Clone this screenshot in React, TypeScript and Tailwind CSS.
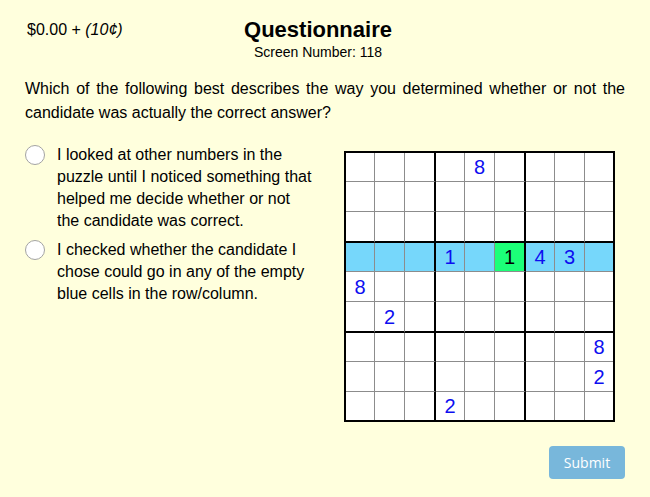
const colW = ['w-[29px]', 'w-[30px]', 'w-[31px]', 'w-[29px]', 'w-[30px]', 'w-[31px]', 'w-[29px]', 'w-[30px]', 'w-[28px]']
const rowH = ['h-[29px]', 'h-[30px]', 'h-[31px]', 'h-[29px]', 'h-[30px]', 'h-[31px]', 'h-[29px]', 'h-[30px]', 'h-[28px]']

// [row, col] -> digit
const givens: Record<string, string> = {
  '0-4': '8',
  '3-3': '1',
  '3-5': '1',
  '3-6': '4',
  '3-7': '3',
  '4-0': '8',
  '5-1': '2',
  '6-8': '8',
  '7-8': '2',
  '8-3': '2',
}

function rightBorder(c: number) {
  if (c === 8) return ''
  if (c === 2 || c === 5) return 'border-r-2 border-r-black'
  return 'border-r border-r-[#8c8c8c]'
}

function bottomBorder(r: number) {
  if (r === 8) return ''
  if (r === 2 || r === 5) return 'border-b-2 border-b-black'
  return 'border-b border-b-[#8c8c8c]'
}

function Board() {
  const rows = Array.from({ length: 9 }, (_, r) => r)
  return (
    <div className="flex flex-col border-2 border-black bg-white">
      {rows.map((r) => (
        <div key={r} className="flex">
          {rows.map((c) => {
            const key = `${r}-${c}`
            const candidate = r === 3 && c === 5
            const bg = candidate ? 'bg-[#1cff78]' : r === 3 ? 'bg-[#76d7fb]' : 'bg-white'
            const color = candidate ? 'text-black' : 'text-[#0e0ef0]'
            return (
              <div
                key={c}
                className={`flex items-center justify-center text-[20px] leading-none ${colW[c]} ${rowH[r]} ${rightBorder(c)} ${bottomBorder(r)} ${bg} ${color}`}
              >
                {givens[key] ?? ''}
              </div>
            )
          })}
        </div>
      ))}
    </div>
  )
}

function Option({ text }: { text: string }) {
  return (
    <label className="flex items-start gap-3">
      <span className="mt-px h-[20px] w-[20px] shrink-0 rounded-full border border-[#a3a3a3] bg-white" />
      <span className="w-[258px] text-[16px] leading-[22px] text-black">{text}</span>
    </label>
  )
}

export default function App() {
  return (
    <div className="h-[497px] w-[650px] bg-[#ffffdd] font-['Liberation_Sans',Arial,sans-serif] text-black">
      <div className="flex px-[27px] pt-[17px]">
        <div className="w-[150px] shrink-0 pt-[4px] text-[16px] leading-[18px]">
          $0.00 + <span className="italic">(10¢)</span>
        </div>
        <div className="w-[282px] text-center">
          <div className="text-[22px] font-bold leading-[26px]">Questionnaire</div>
          <div className="text-[14px] leading-[18px]">Screen Number: 118</div>
        </div>
      </div>

      <p className="mt-[16px] px-[25px] text-justify text-[16px] leading-[24px]">
        Which of the following best describes the way you determined whether or not the candidate was actually
        the correct answer?
      </p>

      <div className="mt-[19px] flex px-[25px]">
        <div className="flex w-[319px] shrink-0 flex-col gap-[7px]">
          <Option text="I looked at other numbers in the puzzle until I noticed something that helped me decide whether or not the candidate was correct." />
          <Option text="I checked whether the candidate I chose could go in any of the empty blue cells in the row/column." />
        </div>
        <div className="pt-[7px]">
          <Board />
        </div>
      </div>

      <div className="mt-[24px] flex justify-end pr-[25px]">
        <button className="h-[33px] w-[76px] rounded-[4px] bg-[#78b7db] font-['Open_Sans',sans-serif] text-[14px] font-medium text-white">
          Submit
        </button>
      </div>
    </div>
  )
}
